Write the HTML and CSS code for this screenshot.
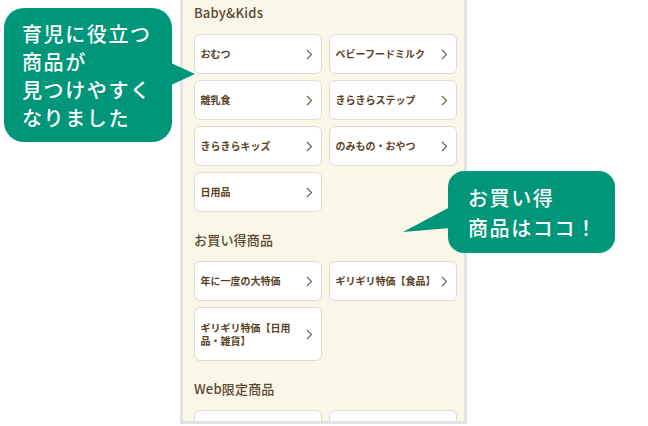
FILE: index.html
```html
<!DOCTYPE html>
<html lang="ja">
<head>
<meta charset="utf-8">
<title>Baby&amp;Kids</title>
<link rel="stylesheet" href="styles.css">
</head>
<body>
<div class="stage">
  <div class="panel">
    <section class="section">
      <h2 class="heading">Baby&amp;Kids</h2>
      <div class="grid">
        <a class="card"><span class="label">おむつ</span><svg class="chev" viewBox="0 0 7 11"><polyline points="1,1 5.5,5.5 1,10"/></svg></a>
        <a class="card"><span class="label">ベビーフードミルク</span><svg class="chev" viewBox="0 0 7 11"><polyline points="1,1 5.5,5.5 1,10"/></svg></a>
        <a class="card"><span class="label">離乳食</span><svg class="chev" viewBox="0 0 7 11"><polyline points="1,1 5.5,5.5 1,10"/></svg></a>
        <a class="card"><span class="label">きらきらステップ</span><svg class="chev" viewBox="0 0 7 11"><polyline points="1,1 5.5,5.5 1,10"/></svg></a>
        <a class="card"><span class="label">きらきらキッズ</span><svg class="chev" viewBox="0 0 7 11"><polyline points="1,1 5.5,5.5 1,10"/></svg></a>
        <a class="card"><span class="label">のみもの・おやつ</span><svg class="chev" viewBox="0 0 7 11"><polyline points="1,1 5.5,5.5 1,10"/></svg></a>
        <a class="card"><span class="label">日用品</span><svg class="chev" viewBox="0 0 7 11"><polyline points="1,1 5.5,5.5 1,10"/></svg></a>
      </div>
    </section>
    <section class="section">
      <h2 class="heading">お買い得商品</h2>
      <div class="grid">
        <a class="card"><span class="label">年に一度の大特価</span><svg class="chev" viewBox="0 0 7 11"><polyline points="1,1 5.5,5.5 1,10"/></svg></a>
        <a class="card"><span class="label">ギリギリ特価【食品】</span><svg class="chev" viewBox="0 0 7 11"><polyline points="1,1 5.5,5.5 1,10"/></svg></a>
        <a class="card tall"><span class="label">ギリギリ特価【日用品・雑貨】</span><svg class="chev" viewBox="0 0 7 11"><polyline points="1,1 5.5,5.5 1,10"/></svg></a>
      </div>
    </section>
    <section class="section">
      <h2 class="heading">Web限定商品</h2>
      <div class="grid">
        <a class="card"><span class="label"></span></a>
        <a class="card"><span class="label"></span></a>
      </div>
    </section>
  </div>

  <svg class="tail tail-1" width="30" height="30" viewBox="0 0 30 30"><polygon points="0,0 24,11 0,22"/></svg>
  <div class="bubble bubble-1">育児に役立つ<br>商品が<br>見つけやすく<br>なりました</div>

  <svg class="tail tail-2" width="50" height="30" viewBox="0 0 50 30"><polygon points="47,0 0,25 47,21"/></svg>
  <div class="bubble bubble-2">お買い得<br>商品はココ！</div>
</div>
</body>
</html>
```

FILE: styles.css
```css
* { box-sizing: border-box; }
html, body { margin: 0; padding: 0; background: #ffffff; }
body {
  font-family: "Noto Sans CJK JP", "Noto Sans", sans-serif;
  width: 648px;
  height: 426px;
  overflow: hidden;
}
.stage {
  position: relative;
  width: 648px;
  height: 426px;
}
.panel {
  margin-left: 180px;
  width: 287px;
  height: 424px;
  overflow: hidden;
  background: #faf6e8;
  border: 3px solid #e2e2e2;
  border-top: 0;
  padding: 3px 7px 0 11px;
}
.section { margin-bottom: 18px; }
.heading {
  margin: 0 0 11px;
  font-size: 13px;
  line-height: 20px;
  font-weight: 500;
  color: #5a4832;
  letter-spacing: 0.2px;
}
.grid {
  display: grid;
  grid-template-columns: 128px 128px;
  column-gap: 7px;
  row-gap: 6px;
}
.card {
  display: flex;
  align-items: center;
  justify-content: space-between;
  min-height: 40px;
  background: #ffffff;
  border: 1.5px solid #dedbd4;
  border-radius: 6px;
  padding: 0 8px 0 5.5px;
  color: #5a4228;
  font-size: 10px;
  font-weight: 700;
  line-height: 13.5px;
}
.card.tall { min-height: 54px; }
.label { flex: 1; max-width: 100px; }
.chev {
  width: 7px;
  height: 11px;
  flex: none;
}
.chev polyline {
  fill: none;
  stroke: #6c5b47;
  stroke-width: 1.1;
}
.bubble {
  position: absolute;
  background: #009679;
  color: #ffffff;
  font-size: 20px;
  font-weight: 500;
  letter-spacing: 1.6px;
}
.bubble-1 {
  left: 4px;
  top: 8px;
  width: 168px;
  height: 134px;
  border-radius: 20px;
  padding: 12px 0 0 18px;
  line-height: 28px;
}
.bubble-2 {
  left: 448px;
  top: 171px;
  width: 167px;
  height: 82px;
  border-radius: 16px;
  padding: 12px 0 0 20px;
  line-height: 30px;
}
.tail { position: absolute; }
.tail polygon { fill: #009679; }
.tail-1 { left: 171px; top: 63px; }
.tail-2 { left: 403px; top: 207px; }
```
